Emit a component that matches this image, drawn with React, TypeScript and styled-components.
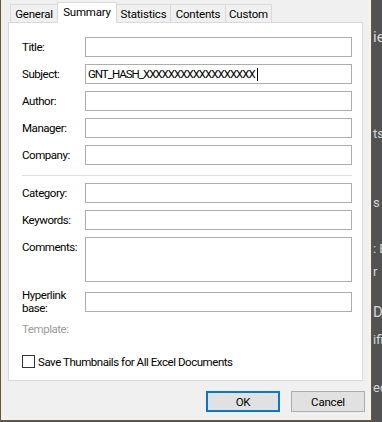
import styled, { createGlobalStyle } from "styled-components";

const ui_font = `Roboto, "Liberation Sans", sans-serif`;
const frame_color = "#6b5736";
const tab_border = "#d9d9d9";
const field_border = "#adadad";

const GlobalStyle = createGlobalStyle`
  html, body {
    margin: 0;
    padding: 0;
    background: #525252;
  }
  * {
    box-sizing: border-box;
  }
`;

const tabs = [
  { name: "General", width: 47, edge: "left" },
  { name: "Summary", width: 60, edge: "both" },
  { name: "Statistics", width: 54, edge: "right" },
  { name: "Contents", width: 55, edge: "right" },
  { name: "Custom", width: 46, edge: "right" },
];

const topFields = ["Title:", "Subject:", "Author:", "Manager:", "Company:"];
const backdrop = [
  { text: "ie", gap: 28, big: true },
  { text: "ts", gap: 80 },
  { text: "s", gap: 53 },
  { text: ": B", gap: 30 },
  { text: "r", gap: 7 },
  { text: "D", gap: 23, big: true },
  { text: "ifi", gap: 11 },
  { text: "ec", gap: 32 },
];

function App() {
  return (
    <Page>
      <GlobalStyle />
      <Dialog>
        <TabStrip>
          {tabs.map((t) => (
            <Tab
              key={t.name}
              $width={t.width}
              $edge={t.edge}
              $selected={t.name === "Summary"}
            >
              {t.name}
            </Tab>
          ))}
        </TabStrip>
        <Panel>
          {topFields.map((f) => (
            <Row key={f}>
              <Label>{f}</Label>
              <Field>
                {f === "Subject:" && (
                  <FieldText>
                    GNT_HASH_XXXXXXXXXXXXXXXXXX
                    <Caret />
                  </FieldText>
                )}
              </Field>
            </Row>
          ))}
          <Separator />
          <Row>
            <Label>Category:</Label>
            <Field />
          </Row>
          <Row>
            <Label>Keywords:</Label>
            <Field />
          </Row>
          <Row $tall>
            <Label $top>Comments:</Label>
            <Field $height={45} />
          </Row>
          <Row>
            <Label>
              Hyperlink
              <br />
              base:
            </Label>
            <Field />
          </Row>
          <Row $gapTop={-3}>
            <Label $disabled>Template:</Label>
          </Row>
          <CheckRow>
            <CheckBox />
            <span>Save Thumbnails for All Excel Documents</span>
          </CheckRow>
        </Panel>
        <ButtonRow>
          <DialogButton $default>OK</DialogButton>
          <DialogButton>Cancel</DialogButton>
        </ButtonRow>
      </Dialog>
      <Backdrop>
        {backdrop.map((b, i) => (
          <BackdropText key={i} $gap={b.gap} $big={b.big}>
            {b.text}
          </BackdropText>
        ))}
      </Backdrop>
    </Page>
  );
}

const Page = styled.div`
  display: flex;
  width: 382px;
  height: 422px;
  overflow: hidden;
  background: #525252;
  font-family: ${ui_font};
  font-size: 11.5px;
  letter-spacing: -0.45px;
  color: #000;
`;

const Dialog = styled.div`
  width: 372px;
  height: 421px;
  flex-shrink: 0;
  display: flex;
  flex-direction: column;
  background: #f0f0f0;
  border-left: 1px solid ${frame_color};
  border-right: 1px solid ${frame_color};
  border-bottom: 1px solid ${frame_color};
  padding-left: 7px;
`;

const TabStrip = styled.div`
  display: flex;
  align-items: flex-end;
  height: 21px;
  margin-top: 2px;
  padding-left: 2px;
  position: relative;
  z-index: 1;
  letter-spacing: -0.2px;
`;

const Tab = styled.div<{ $width: number; $edge: string; $selected?: boolean }>`
  width: ${(p) => p.$width}px;
  height: ${(p) => (p.$selected ? 21 : 18)}px;
  margin-bottom: ${(p) => (p.$selected ? 0 : 1)}px;
  display: flex;
  align-items: center;
  justify-content: center;
  padding-bottom: ${(p) => (p.$selected ? 2 : 0)}px;
  background: ${(p) => (p.$selected ? "#fff" : "#f0f0f0")};
  border-top: 1px solid ${tab_border};
  border-left: ${(p) =>
    p.$edge === "left" || p.$edge === "both" ? `1px solid ${tab_border}` : "none"};
  border-right: ${(p) =>
    p.$edge === "right" || p.$edge === "both" ? `1px solid ${tab_border}` : "none"};
  white-space: nowrap;
`;

const Panel = styled.div`
  width: 355px;
  height: 359px;
  margin-top: -1px;
  background: #fff;
  border: 1px solid ${tab_border};
  padding: 14px 10px 0 13px;
  display: flex;
  flex-direction: column;
`;

const Row = styled.div<{ $tall?: boolean; $gapTop?: number }>`
  display: flex;
  align-items: ${(p) => (p.$tall ? "flex-start" : "center")};
  min-height: 20px;
  margin-top: ${(p) => p.$gapTop ?? 0}px;
  margin-bottom: 7px;
`;

const Label = styled.div<{ $top?: boolean; $disabled?: boolean }>`
  width: 63px;
  flex-shrink: 0;
  line-height: 13px;
  padding-top: ${(p) => (p.$top ? 4 : 0)}px;
  color: ${(p) => (p.$disabled ? "#9c9c9c" : "#000")};
`;

const Field = styled.div<{ $height?: number }>`
  flex: 1;
  height: ${(p) => p.$height ?? 20}px;
  border: 1px solid ${field_border};
  background: #fff;
  display: flex;
  align-items: center;
  padding-left: 2px;
  white-space: nowrap;
  overflow: hidden;
`;

const FieldText = styled.span`
  display: flex;
  align-items: center;
  letter-spacing: -1px;
`;

const Caret = styled.span`
  display: inline-block;
  width: 1px;
  height: 13px;
  margin-left: 2px;
  background: #000;
`;

const Separator = styled.div`
  height: 1px;
  background: #dfdfdf;
  margin: 3px 0 7px;
`;

const CheckRow = styled.div`
  display: flex;
  align-items: center;
  gap: 3px;
  margin-top: 9px;
  height: 13px;
  white-space: nowrap;
`;

const CheckBox = styled.div`
  width: 13px;
  height: 13px;
  border: 1px solid #333;
  background: #fff;
`;

const ButtonRow = styled.div`
  display: flex;
  justify-content: flex-end;
  gap: 11px;
  margin-top: 10px;
  padding-right: 6px;
`;

const DialogButton = styled.div<{ $default?: boolean }>`
  width: 74px;
  height: 21px;
  display: flex;
  align-items: center;
  justify-content: center;
  background: #e1e1e1;
  letter-spacing: -0.2px;
  border: ${(p) => (p.$default ? "2px solid #0078d7" : `1px solid ${field_border}`)};
`;

const Backdrop = styled.div`
  flex: 1;
  display: flex;
  flex-direction: column;
  overflow: hidden;
  padding-left: 1px;
`;

const BackdropText = styled.div<{ $gap: number; $big?: boolean }>`
  margin-top: ${(p) => p.$gap}px;
  font-size: ${(p) => (p.$big ? 15 : 13)}px;
  line-height: ${(p) => (p.$big ? 18 : 16)}px;
  letter-spacing: 0;
  color: #d6d6d6;
  white-space: nowrap;
`;

export default App;
